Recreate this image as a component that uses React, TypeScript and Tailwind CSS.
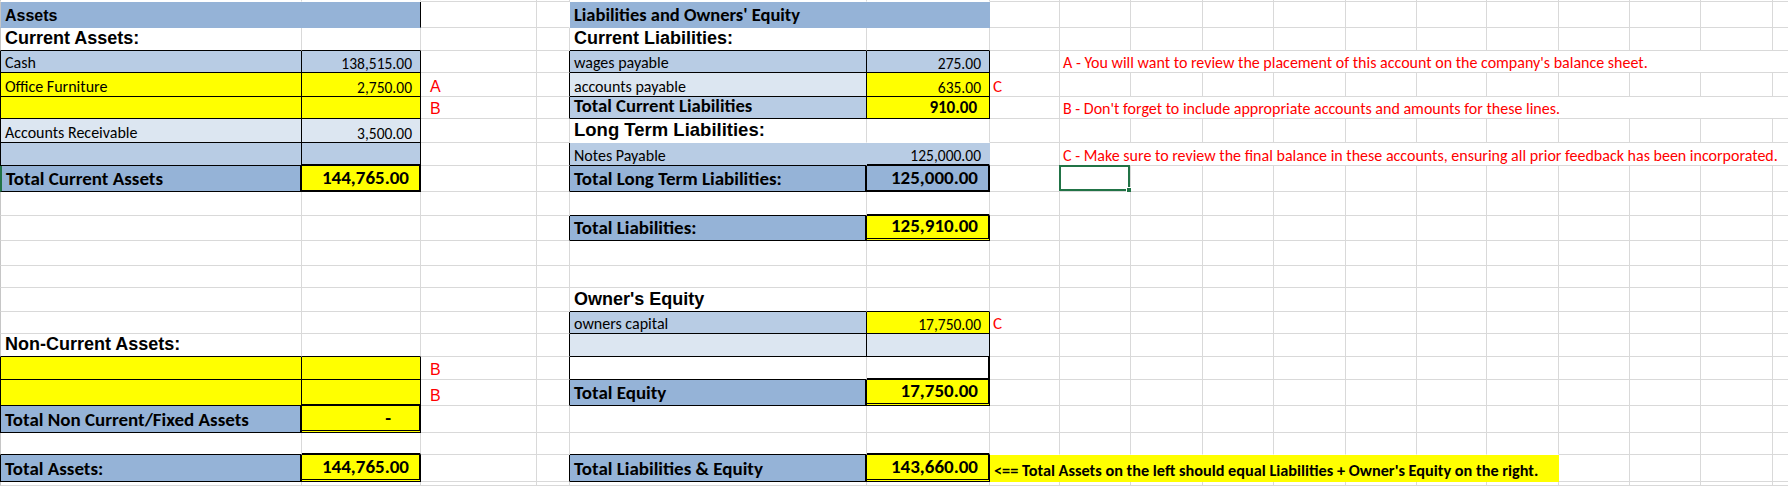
import React from "react";

type Edge = "t" | "m" | "d";
type Cell = {
  bg?: string;
  t?: Edge;
  r?: Edge;
  b?: Edge;
  l?: Edge | "g";
  text?: string;
  right?: boolean;
  cls?: string;
  span?: number;
  sel?: boolean;
  skip?: boolean;
};

const COLS = 18;
const ROWS = 22;

const H = "bg-[#95B3D7]";
const L = "bg-[#B8CCE4]";
const LL = "bg-[#DCE6F1]";
const Y = "bg-[#FFFF00]";

const CAL = "[font-family:Carlito,Calibri,Lato,sans-serif]";
const ARL = "[font-family:Liberation_Sans,Arial,sans-serif]";

const label = `${CAL} text-[16px] text-black pl-[4px] pb-[1px]`;
const value = `${CAL} text-[15.5px] text-black pr-[8px] pb-[1px]`;
const boldLabel = `${CAL} text-[19px] font-bold text-black pl-[4px] pb-[3px]`;
const boldValue = `${CAL} text-[19px] font-bold text-black pr-[10px] pb-[3px]`;
const heading = `${ARL} text-[18px] font-bold text-black pl-[4px] pb-[3px]`;
const mark = `${ARL} text-[16px] text-[#FF0000] pl-[9px] pb-[1px]`;
const markC = `${CAL} text-[17px] text-[#FF0000] pl-[3px] pb-[1px]`;
const note = `${CAL} text-[16px] text-[#FF0000] pl-[3px] pb-[1px]`;

const rank = { t: 1, m: 2, d: 3 } as const;
const strong = (a?: Edge, b?: Edge): Edge | undefined =>
  !a ? b : !b ? a : rank[a] >= rank[b] ? a : b;

const RIGHT: Record<Edge, string> = {
  t: "border-r border-r-black",
  m: "border-r-2 border-r-black",
  d: "border-r-2 border-r-black",
};
const BOTTOM: Record<Edge, string> = {
  t: "border-b border-b-black",
  m: "border-b-2 border-b-black",
  d: "border-b-[3px] border-b-black [border-bottom-style:double]",
};

const SPAN: Record<number, string> = {
  1: "col-span-1",
  2: "col-span-2",
  8: "col-span-8",
  11: "col-span-11",
};

const box = (e: Edge = "t") => ({ t: e, r: e, b: e, l: e });
const total = { t: "m" as Edge, r: "m" as Edge, l: "m" as Edge, b: "d" as Edge };

function buildSheet(): Cell[][] {
  const g: Cell[][] = Array.from({ length: ROWS }, () =>
    Array.from({ length: COLS }, () => ({} as Cell))
  );
  const set = (r: number, c: number, cell: Cell) => {
    g[r][c] = cell;
    for (let i = 1; i < (cell.span ?? 1); i++) g[r][c + i] = { skip: true, bg: cell.bg };
  };

  // left side – assets
  set(1, 0, { bg: H, text: "Assets", cls: `${ARL} text-[16px] font-bold text-black pl-[4px] pb-[3px]` });
  set(1, 1, { bg: H, r: "t" });
  set(2, 0, { text: "Current Assets:", cls: heading });
  set(3, 0, { bg: L, ...box(), text: "Cash", cls: label });
  set(3, 1, { bg: L, ...box(), text: "138,515.00", right: true, cls: value });
  set(4, 0, { bg: Y, ...box(), text: "Office Furniture", cls: label });
  set(4, 1, { bg: Y, ...box(), text: "2,750.00", right: true, cls: value });
  set(4, 2, { text: "A", cls: mark });
  set(5, 0, { bg: Y, ...box() });
  set(5, 1, { bg: Y, ...box() });
  set(5, 2, { text: "B", cls: mark });
  set(6, 0, { bg: LL, ...box(), text: "Accounts Receivable", cls: label });
  set(6, 1, { bg: LL, ...box(), text: "3,500.00", right: true, cls: value });
  set(7, 0, { bg: L, ...box() });
  set(7, 1, { bg: L, ...box() });
  set(8, 0, { bg: H, ...box(), l: "g", text: "Total Current Assets", cls: boldLabel });
  set(8, 1, { bg: Y, ...box("m"), text: "144,765.00", right: true, cls: boldValue });

  set(15, 0, { text: "Non-Current Assets:", cls: heading });
  set(16, 0, { bg: Y, ...box() });
  set(16, 1, { bg: Y, ...box() });
  set(16, 2, { text: "B", cls: mark });
  set(17, 0, { bg: Y, ...box() });
  set(17, 1, { bg: Y, ...box() });
  set(17, 2, { text: "B", cls: mark });
  set(18, 0, { bg: H, ...box(), text: "Total Non Current/Fixed Assets", cls: boldLabel });
  set(18, 1, { bg: Y, ...total, text: "-", right: true, cls: `${CAL} text-[19px] font-bold text-black pr-[28px] pb-[3px]` });
  set(20, 0, { bg: H, ...box(), text: "Total Assets:", cls: boldLabel });
  set(20, 1, { bg: Y, ...total, text: "144,765.00", right: true, cls: boldValue });

  // right side – liabilities and equity
  set(1, 4, { bg: H, text: "Liabilities and Owners' Equity", cls: `${CAL} text-[18.5px] font-bold text-black pl-[4px] pb-[3px]` });
  set(1, 5, { bg: H });
  set(2, 4, { text: "Current Liabilities:", cls: heading });
  set(3, 4, { bg: L, ...box(), text: "wages payable", cls: label });
  set(3, 5, { bg: L, ...box(), text: "275.00", right: true, cls: value });
  set(4, 4, { bg: LL, ...box(), text: "accounts payable", cls: label });
  set(4, 5, { bg: Y, ...box(), text: "635.00", right: true, cls: value });
  set(4, 6, { text: "C", cls: markC });
  set(5, 4, { bg: L, ...box(), text: "Total Current Liabilities", cls: `${CAL} text-[18.7px] font-bold text-black pl-[4px] pb-[2px]` });
  set(5, 5, { bg: Y, ...box(), text: "910.00", right: true, cls: `${CAL} text-[17px] font-bold text-black pr-[12px] pb-[2px]` });
  set(6, 4, { text: "Long Term Liabilities:", cls: `${ARL} text-[18.5px] font-bold text-black pl-[4px] pb-[3px]` });
  set(7, 4, { bg: L, l: "t", text: "Notes Payable", cls: label });
  set(7, 5, { bg: L, text: "125,000.00", right: true, cls: value });
  set(8, 4, { bg: H, ...box(), text: "Total Long Term Liabilities:", cls: boldLabel });
  set(8, 5, { bg: H, ...box("m"), text: "125,000.00", right: true, cls: boldValue });
  set(10, 4, { bg: H, ...box(), text: "Total Liabilities:", cls: boldLabel });
  set(10, 5, { bg: Y, ...total, text: "125,910.00", right: true, cls: boldValue });

  set(13, 4, { text: "Owner's Equity", cls: `${ARL} text-[18px] font-bold text-black pl-[4px] pb-[3px]` });
  set(14, 4, { bg: L, ...box(), text: "owners capital", cls: label });
  set(14, 5, { bg: Y, ...box(), text: "17,750.00", right: true, cls: value });
  set(14, 6, { text: "C", cls: markC });
  set(15, 4, { bg: LL, ...box() });
  set(15, 5, { bg: LL, ...box() });
  set(16, 4, { l: "t" });
  set(16, 5, { r: "m" });
  set(17, 4, { bg: H, ...box(), text: "Total Equity", cls: boldLabel });
  set(17, 5, { bg: Y, ...total, text: "17,750.00", right: true, cls: boldValue });
  set(20, 4, { bg: H, ...box(), text: "Total Liabilities & Equity", cls: boldLabel });
  set(20, 5, { bg: Y, ...total, text: "143,660.00", right: true, cls: boldValue });
  set(20, 6, {
    bg: Y,
    span: 8,
    text: "<== Total Assets on the left should equal Liabilities + Owner's Equity on the right.",
    cls: `${CAL} text-[16.3px] font-bold text-black pl-[4px] pb-[3px]`,
  });

  // review notes
  set(3, 7, { span: 11, text: "A - You will want to review the placement of this account on the company's balance sheet.", cls: note });
  set(5, 7, { span: 11, text: "B - Don't forget to include appropriate accounts and amounts for these lines.", cls: note });
  set(7, 7, { span: 11, text: "C - Make sure to review the final balance in these accounts, ensuring all prior feedback has been incorporated.", cls: note });
  set(8, 7, { sel: true });

  return g;
}

const sheet = buildSheet();

function edgeClasses(r: number, c: number): string {
  const cell = sheet[r][c];
  const span = cell.span ?? 1;
  const next = c + span < COLS ? sheet[r][c + span] : undefined;
  const below = r + 1 < ROWS ? sheet[r + 1][c] : undefined;
  const out: string[] = [];

  const rEdge = strong(cell.r, next?.l === "g" ? undefined : (next?.l as Edge | undefined));
  if (rEdge) out.push(RIGHT[rEdge]);
  else if (cell.bg || (next?.bg && !next.skip)) out.push("border-r border-r-transparent");
  else out.push("border-r border-r-[#D9D9D9]");

  const bEdge = strong(cell.b, below?.t);
  if (bEdge) out.push(BOTTOM[bEdge]);
  else if (cell.bg || below?.bg) out.push("border-b border-b-transparent");
  else out.push("border-b border-b-[#D9D9D9]");

  if (c === 0) {
    if (cell.l === "g") out.push("border-l-2 border-l-[#217346]");
    else if (cell.l) out.push("border-l border-l-black");
    else out.push("border-l border-l-[#C6C6C6]");
  }
  return out.join(" ");
}

function SheetCell({ r, c }: { r: number; c: number }) {
  const cell = sheet[r][c];
  return (
    <div
      className={`relative flex items-end overflow-visible ${SPAN[cell.span ?? 1]} ${
        cell.bg ?? "bg-white"
      } ${cell.right ? "justify-end" : "justify-start"} ${edgeClasses(r, c)}`}
    >
      {cell.text && (
        <span className={`relative z-10 whitespace-nowrap leading-none ${cell.cls ?? ""}`}>{cell.text}</span>
      )}
      {cell.sel && (
        <div className="absolute -left-[1px] -top-[1px] right-0 bottom-0 border-2 border-[#217346]">
          <div className="absolute -right-[4px] -bottom-[4px] w-[6px] h-[6px] bg-[#217346] border border-white" />
        </div>
      )}
    </div>
  );
}

export default function App() {
  return (
    <div className="w-[1788px] h-[486px] overflow-hidden bg-white">
      <div className="grid grid-cols-[302px_119px_116px_33px_297px_123px_70px_71px_72px_71px_72px_71px_70px_72px_71px_71px_72px_71px] grid-rows-[2px_26px_23px_22px_24px_22px_24px_23px_26px_24px_25px_25px_22px_24px_22px_23px_23px_26px_27px_22px_27px_4px] w-max">
        {sheet.map((row, r) =>
          row.map((cell, c) => (cell.skip ? null : <SheetCell key={`${r}-${c}`} r={r} c={c} />))
        )}
      </div>
    </div>
  );
}
